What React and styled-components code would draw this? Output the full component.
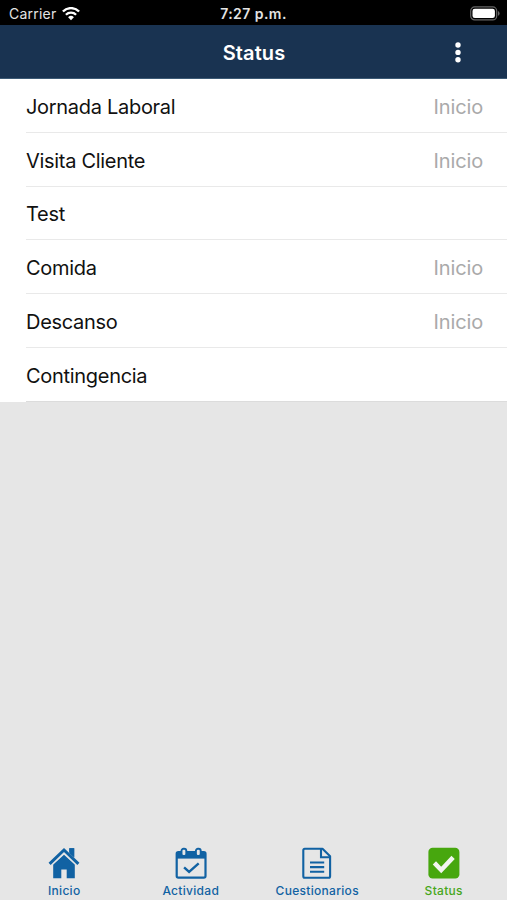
import React from "react";
import styled, { createGlobalStyle } from "styled-components";

const GlobalStyle = createGlobalStyle`
  * {
    box-sizing: border-box;
  }
  body {
    margin: 0;
    font-family: Inter, "Liberation Sans", sans-serif;
  }
`;

const Screen = styled.div`
  display: flex;
  flex-direction: column;
  width: 100%;
  height: 100vh;
  overflow: hidden;
  background: #e6e6e6;
`;

const StatusBar = styled.div`
  display: grid;
  grid-template-columns: 1fr auto 1fr;
  align-items: center;
  height: 25px;
  padding: 2px 7px 0 9px;
  background: #000;
  color: #e4e4e4;
`;

const Carrier = styled.div`
  display: flex;
  align-items: center;
  gap: 6px;
  font-size: 14px;
  letter-spacing: 0.22px;
`;

const Clock = styled.div`
  margin-right: 2px;
  font-size: 14px;
  font-weight: 600;
  letter-spacing: 0.45px;
`;

const Battery = styled.svg`
  justify-self: end;
  margin-bottom: 1px;
`;

const Header = styled.header`
  display: grid;
  grid-template-columns: 1fr auto 1fr;
  align-items: center;
  height: 54px;
  padding-right: 46px;
  padding-left: 47px;
  border-bottom: 1px solid #3c5a75;
  background: #193351;
  color: #fff;
`;

const Title = styled.h1`
  grid-column: 2;
  margin: 0;
  padding-top: 2px;
  font-size: 20px;
  font-weight: 600;
  letter-spacing: 0.1px;
`;

const MenuButton = styled.button`
  display: flex;
  justify-self: end;
  padding: 0;
  border: 0;
  background: none;
`;

const List = styled.ul`
  margin: 0;
  padding: 0;
  list-style: none;
  background: #fff;
`;

const Row = styled.li`
  display: flex;
  height: 53.75px;
  padding-left: 26px;
`;

const RowContent = styled.div`
  display: flex;
  flex: 1;
  align-items: center;
  justify-content: space-between;
  padding-right: 24px;
  padding-top: 3px;
  border-bottom: 1px solid ${(props) => (props.$last ? "#dcdcdc" : "#e9e9e9")};
  font-size: 20px;
`;

const Label = styled.span`
  color: #111;
  letter-spacing: -0.3px;
`;

const Action = styled.span`
  color: #aaa;
  letter-spacing: -0.15px;
`;

const TabBar = styled.nav`
  display: grid;
  grid-template-columns: repeat(4, 1fr);
  height: 53px;
  margin-top: auto;
  padding-left: 1px;
`;

const Tab = styled.div`
  display: flex;
  flex-direction: column;
  align-items: center;
  gap: 4px;
  color: ${(props) => (props.$active ? "#47a61c" : "#1162a3")};
`;

const TabLabel = styled.span`
  font-size: 12px;
  line-height: 16px;
  font-weight: 500;
  letter-spacing: 0.3px;
`;

const rows = [
  { label: "Jornada Laboral", action: "Inicio" },
  { label: "Visita Cliente", action: "Inicio" },
  { label: "Test" },
  { label: "Comida", action: "Inicio" },
  { label: "Descanso", action: "Inicio" },
  { label: "Contingencia" },
];

const WifiIcon = () => (
  <svg width="18" height="14" viewBox="0 0 18 14" fill="none" stroke="#fff">
    <path d="M.9 4.5a11.4 11.4 0 0 1 16.2 0" strokeWidth="2.4" />
    <path d="M3.9 7.8a7.2 7.2 0 0 1 10.2 0" strokeWidth="2.3" />
    <path d="M9 13.2 6.1 10.3a4.1 4.1 0 0 1 5.8 0Z" fill="#fff" stroke="none" />
  </svg>
);

const HomeIcon = () => (
  <svg width="32" height="32" viewBox="0 0 32 32" fill="currentColor">
    <path d="M5.2 17.6 16 7.8l10.8 9.8v13.6h-8.1v-8.8h-5.4v8.8H5.2Z" />
    <path d="M21.3 1.2h4.9v10.5l-4.9-4.4Z" />
    <path d="M1.8 17.2 16 3.4l14.2 13.8" fill="none" stroke="#e6e6e6" strokeWidth="5" />
    <path d="M21.3 1.2h4.9v9.3l-4.9-4.2Z" />
    <path d="M1.6 16.8 16 3l14.4 13.8" fill="none" stroke="currentColor" strokeWidth="3" />
  </svg>
);

const CalendarIcon = () => (
  <svg width="32" height="32" viewBox="0 0 32 32" fill="none" stroke="currentColor">
    <rect x="1.7" y="5" width="28.8" height="25.7" rx="1.7" strokeWidth="2.2" />
    <path d="M1.7 5h28.8v6.6H1.7Z" fill="currentColor" stroke="none" />
    <rect x="6.5" y="1.7" width="4.8" height="7.3" rx="2.1" fill="#e6e6e6" strokeWidth="1.9" />
    <rect x="20.9" y="1.7" width="4.8" height="7.3" rx="2.1" fill="#e6e6e6" strokeWidth="1.9" />
    <path d="m9.1 20.4 5 4.6 9.6-8.6" strokeWidth="2.4" />
  </svg>
);

const DocumentIcon = () => (
  <svg width="32" height="32" viewBox="0 0 32 32" fill="none" stroke="currentColor" strokeWidth="2.1">
    <path d="M3.7 1.8q-1.4 0-1.4 1.4v26q0 1.5 1.4 1.5h24q1.4 0 1.4-1.5V9.3l-7.6-7.5Z" strokeLinejoin="round" />
    <path d="M20 1.8v8.4h9" />
    <path d="M9 15.5h14.2M9 20.1h14.2M9 24.7h14.2" />
  </svg>
);

const CheckIcon = () => (
  <svg width="32" height="32" viewBox="0 0 32 32">
    <rect x="0.4" y="0.8" width="31" height="30.8" rx="4.2" fill="#47a70e" />
    <path d="m6.4 15.9 6.8 7.1L25.1 10.4" fill="none" stroke="#f2f5ef" strokeWidth="4.5" />
  </svg>
);

const tabs = [
  { label: "Inicio", icon: HomeIcon },
  { label: "Actividad", icon: CalendarIcon },
  { label: "Cuestionarios", icon: DocumentIcon },
  { label: "Status", icon: CheckIcon, active: true },
];

function App() {
  return (
    <Screen>
      <GlobalStyle />
      <StatusBar>
        <Carrier>
          Carrier
          <WifiIcon />
        </Carrier>
        <Clock>7:27 p.m.</Clock>
        <Battery width="30" height="15" viewBox="0 0 30 15">
          <rect x="0.7" y="0.9" width="26" height="13" rx="4" fill="none" stroke="#666" strokeWidth="1.2" />
          <rect x="2.5" y="2.7" width="22.4" height="9.4" rx="2.3" fill="#fff" />
          <path d="M28 5q1.6.8 1.6 2.4T28 9.8Z" fill="#666" />
        </Battery>
      </StatusBar>
      <Header>
        <Title>Status</Title>
        <MenuButton aria-label="Menu">
          <svg width="6" height="22" viewBox="0 0 6 22" fill="#fff">
            <circle cx="3" cy="4" r="2.7" />
            <circle cx="3" cy="11.4" r="2.7" />
            <circle cx="3" cy="18.8" r="2.7" />
          </svg>
        </MenuButton>
      </Header>
      <List>
        {rows.map(({ label, action }, index) => (
          <Row key={label}>
            <RowContent $last={index === rows.length - 1}>
              <Label>{label}</Label>
              {action && <Action>{action}</Action>}
            </RowContent>
          </Row>
        ))}
      </List>
      <TabBar>
        {tabs.map(({ label, icon: Icon, active }) => (
          <Tab key={label} $active={active}>
            <Icon />
            <TabLabel>{label}</TabLabel>
          </Tab>
        ))}
      </TabBar>
    </Screen>
  );
}

export default App;
